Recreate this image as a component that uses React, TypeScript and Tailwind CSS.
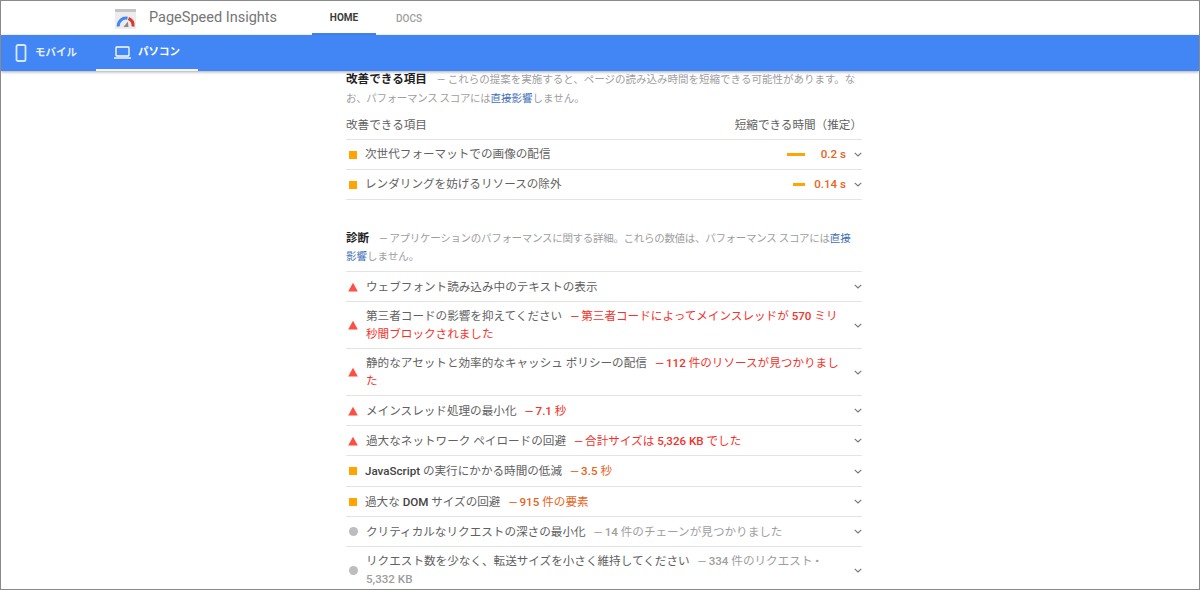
import React from "react";

const font = { fontFamily: '"Roboto", "Noto Sans CJK JP", sans-serif' };

type Kind = "tri" | "sq" | "dot";

function Chevron() {
  return (
    <svg width="8" height="5" viewBox="0 0 8 5" className="shrink-0 ml-[6px]">
      <path d="M0.7 0.8 L4 4 L7.3 0.8" fill="none" stroke="#757575" strokeWidth="1.1" />
    </svg>
  );
}

function Mark({ kind }: { kind: Kind }) {
  return (
    <span className={`w-[14px] shrink-0 flex items-center justify-center ${kind === "sq" ? "mr-[5px]" : "mr-[6px]"}`}>
      {kind === "tri" && (
        <svg width="10" height="10" viewBox="0 0 10 10">
          <path d="M5 0.8 L9.8 9.6 L0.2 9.6 Z" fill="#ff4e42" />
        </svg>
      )}
      {kind === "sq" && <span className="block w-2 h-2 bg-[#ffa400]" />}
      {kind === "dot" && <span className="block w-[9px] h-[9px] rounded-full bg-[#bdbdbd]" />}
    </span>
  );
}

function Row({
  kind,
  title,
  detail,
  color,
  size,
}: {
  kind: Kind;
  title: React.ReactNode;
  detail?: React.ReactNode;
  color?: string;
  size?: string;
}) {
  return (
    <div className={`flex items-center border-t border-[#e3e3e3] ${size ?? "h-[30px]"}`}>
      <Mark kind={kind} />
      <div className="flex-1 min-w-0 leading-[18px] text-[#616161] pr-[3px]">
        {title}
        {detail && <span className={`ml-[8px] ${color}`}>{detail}</span>}
      </div>
      <Chevron />
    </div>
  );
}

const B = ({ children }: { children: React.ReactNode }) => <b className="font-medium">{children}</b>;
const Dash = () => <span className="mr-[2px]">—</span>;
const RED = "text-[#f6312a]";
const ORG = "text-[#e8641b]";
const GRY = "text-[#9e9e9e]";
const TALL = "pt-[5px] pb-[5px]";

export default function App() {
  return (
    <div style={font} className="w-[1200px] h-[590px] overflow-hidden bg-white border border-[#8a8a8a] relative text-[11.6px]">
      <header className="h-[34px] flex items-stretch bg-white">
        <div className="w-[114px]" />
        <div className="flex items-center w-[197px]">
          <svg width="21" height="20" viewBox="0 0 21 20" className="mt-[1px]">
            <rect width="21" height="20" fill="#ececec" />
            <rect width="21" height="3" fill="#c4c4c4" />
            <path d="M3.4 17.5 A7.6 7.6 0 0 1 12.5 9.2" fill="none" stroke="#4285f4" strokeWidth="3" />
            <path d="M13.5 9.5 A7.6 7.6 0 0 1 18 17.5" fill="none" stroke="#d9392b" strokeWidth="3" />
            <path d="M8.5 18 L12.8 12.5 L13.5 18 Z" fill="#8a8a8a" />
          </svg>
          <span className="ml-[13px] text-[14.5px] text-[#757575]">PageSpeed Insights</span>
        </div>
        <nav className="flex text-[10px]">
          <div className="w-[64px] flex items-center justify-center text-[#3c3c3c] border-b-2 border-[#4285f4] font-bold">HOME</div>
          <div className="w-[66px] flex items-center justify-center text-[#9e9e9e] font-medium">DOCS</div>
        </nav>
      </header>
      <div className="h-[36px] bg-[#4285f4] flex text-white text-[10.5px] font-bold shadow-[0_1px_3px_rgba(0,0,0,0.35)] relative">
        <div className="w-[95px] flex items-center pl-[14px]">
          <svg width="12" height="18" viewBox="0 0 12 18">
            <rect x="1.5" y="1" width="9" height="16" rx="1.6" fill="none" stroke="#dbe7fc" strokeWidth="1.8" />
          </svg>
          <span className="ml-[8px] text-[#e3edfd]">モバイル</span>
        </div>
        <div className="w-[102px] flex items-center pl-[18px] border-b-2 border-[#f1f5fe]">
          <svg width="17" height="13" viewBox="0 0 17 13">
            <rect x="2" y="1" width="13" height="9" rx="0.8" fill="none" stroke="#fff" strokeWidth="1.3" />
            <path d="M0 12 H17" stroke="#fff" strokeWidth="1.4" />
          </svg>
          <span className="ml-[7px]">パソコン</span>
        </div>
      </div>
      <main className="w-[516px] ml-[345px]">
        <p className="leading-[19px] mt-[-1px] mb-[9px] text-[#9e9e9e] text-[10.5px]">
          <b className="text-[11.6px] text-[#212121] font-bold mr-[10px]">改善できる項目</b>
          — これらの提案を実施すると、ページの読み込み時間を短縮できる可能性があります。な
          <span className="tracking-[-0.33px]">お、パフォーマンス スコアには</span>
          <span className="text-[#3f6fb8]">直接影響</span>しません。
        </p>
        <div className="flex justify-between h-[22px] text-[#616161]">
          <span>改善できる項目</span>
          <span>短縮できる時間（推定）</span>
        </div>
        <div className="flex items-center border-t border-[#e3e3e3] h-[30px]">
          <Mark kind="sq" />
          <span className="flex-1 text-[#616161]">次世代フォーマットでの画像の配信</span>
          <span className="w-[18px] h-[3px] bg-[#ffa400] mr-[16px]" />
          <span className="text-[#e8641b] font-medium mr-[2px]">0.2 s</span>
          <Chevron />
        </div>
        <div className="flex items-center border-t border-b border-[#e3e3e3] h-[31px]">
          <Mark kind="sq" />
          <span className="flex-1 text-[#616161]">レンダリングを妨げるリソースの除外</span>
          <span className="w-[12px] h-[3px] bg-[#ffa400] mr-[9px]" />
          <span className="text-[#e8641b] font-medium mr-[2px]">0.14 s</span>
          <Chevron />
        </div>
        <p className="leading-[18px] mt-[29px] mb-[5px] pr-[4px] text-[#9e9e9e] text-[10.5px]">
          <b className="text-[11.6px] text-[#212121] font-bold mr-[10px]">診断</b>
          <span className="tracking-[-0.3px]">— アプリケーションのパフォーマンスに関する詳細。これらの数値は、パフォーマンス スコアには</span>
          <span className="text-[#3f6fb8]">直接影響</span>しません。
        </p>
        <Row kind="tri" title="ウェブフォント読み込み中のテキストの表示" />
        <Row kind="tri" size={TALL} title="第三者コードの影響を抑えてください" color={RED} detail={<><Dash />第三者コードによってメインスレッドが <B>570</B> ミリ秒間ブロックされました</>} />
        <Row kind="tri" size={TALL} title="静的なアセットと効率的なキャッシュ ポリシーの配信" color={RED} detail={<><Dash /><B>112</B> 件のリソースが見つかりました</>} />
        <Row kind="tri" title="メインスレッド処理の最小化" color={RED} detail={<><Dash /><B>7.1</B> 秒</>} />
        <Row kind="tri" title="過大なネットワーク ペイロードの回避" color={RED} detail={<><Dash />合計サイズは <B>5,326 KB</B> でした</>} />
        <Row kind="sq" size="h-[31px]" title={<><span className="font-medium text-[#424242]">JavaScript</span> の実行にかかる時間の低減</>} color={ORG} detail={<><Dash /><B>3.5</B> 秒</>} />
        <Row kind="sq" title={<>過大な <span className="font-medium text-[#424242]">DOM</span> サイズの回避</>} color={ORG} detail={<><Dash /><B>915</B> 件の要素</>} />
        <Row kind="dot" title="クリティカルなリクエストの深さの最小化" color={GRY} detail={<><Dash /><B>14</B> 件のチェーンが見つかりました</>} />
        <Row kind="dot" size={TALL} title="リクエスト数を少なく、転送サイズを小さく維持してください" color={GRY} detail={<><Dash /><B>334</B> 件のリクエスト • <B>5,332 KB</B></>} />
      </main>
    </div>
  );
}
